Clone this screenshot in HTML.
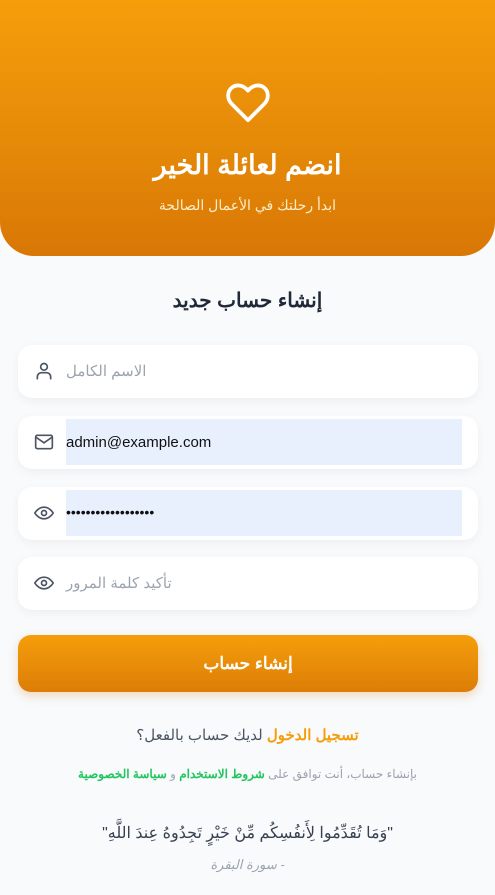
<!DOCTYPE html>
<html lang="ar" dir="rtl"><head><meta charset="utf-8"><style>
*{margin:0;padding:0;box-sizing:border-box}
body{width:495px;height:895px;background:#f8fafc;font-family:"Liberation Sans","Noto Sans CJK SC",sans-serif;position:relative;overflow:hidden}
.hdr{position:absolute;left:0;top:0;width:495px;height:256px;background:linear-gradient(180deg,#f59e0b 0%,#e58a08 55%,#d97706 100%);border-radius:0 0 34px 34px;text-align:center;color:#fff}
.hdr svg{position:absolute;left:225px;top:82px}
.t1{position:absolute;top:150px;width:100%;font-size:27px;font-weight:bold}
.t2{position:absolute;top:197px;width:100%;font-size:14px;color:#fdecc8}
.h2{position:absolute;top:288px;width:100%;text-align:center;font-size:20px;font-weight:bold;color:#1f2937}
.inp{position:absolute;left:18px;width:460px;height:53px;background:#fff;border-radius:14px;box-shadow:0 3px 10px rgba(0,0,0,.05)}
.inp svg{position:absolute;left:16px;top:16px}
.ph{position:absolute;top:17px;font-size:15px;color:#9ca3af;white-space:nowrap}
.fill{position:absolute;left:48px;top:3px;width:396px;height:46px;background:#e8f0fe;direction:ltr;font-size:15px;color:#111;padding:15px 0 0 0}
.btn{position:absolute;left:18px;top:635px;width:460px;height:57px;border-radius:13px;background:linear-gradient(180deg,#f59e0b,#dd7d07);color:#fff;font-weight:bold;font-size:17px;text-align:center;line-height:57px;box-shadow:0 4px 10px rgba(217,119,6,.25)}
.c{position:absolute;width:100%;text-align:center}
</style></head><body>
<div class="hdr">
<svg width="46" height="42" viewBox="0 0 24 22" fill="none" stroke="#fff" stroke-width="2" stroke-linejoin="round"><path d="M12 20 L3.5 11.5 C1 9 1 5 3.5 3 C6 1 9.5 1.5 12 4.5 C14.5 1.5 18 1 20.5 3 C23 5 23 9 20.5 11.5 Z"/></svg>
<div class="t1">انضم لعائلة الخير</div>
<div class="t2">ابدأ رحلتك في الأعمال الصالحة</div>
</div>
<div class="h2">إنشاء حساب جديد</div>
<div class="inp" style="top:345px"><svg width="20" height="20" viewBox="0 0 24 24" fill="none" stroke="#4b5563" stroke-width="2"><circle cx="12" cy="7" r="4"/><path d="M4 22v-3a5 5 0 0 1 5-5h6a5 5 0 0 1 5 5v3"/></svg><div class="ph" style="left:48px">الاسم الكامل</div></div>
<div class="inp" style="top:416px"><svg width="20" height="20" viewBox="0 0 24 24" fill="none" stroke="#4b5563" stroke-width="2"><rect x="2" y="4" width="20" height="16" rx="2"/><path d="M2 6l10 7 10-7"/></svg><div class="fill">admin@example.com</div></div>
<div class="inp" style="top:487px"><svg width="20" height="20" viewBox="0 0 24 24" fill="none" stroke="#4b5563" stroke-width="2"><path d="M1 12s4-7 11-7 11 7 11 7-4 7-11 7S1 12 1 12z"/><circle cx="12" cy="12" r="3"/></svg><div class="fill" style="font-size:14px;padding-top:14px">••••••••••••••••••</div></div>
<div class="inp" style="top:557px"><svg width="20" height="20" viewBox="0 0 24 24" fill="none" stroke="#4b5563" stroke-width="2"><path d="M1 12s4-7 11-7 11 7 11 7-4 7-11 7S1 12 1 12z"/><circle cx="12" cy="12" r="3"/></svg><div class="ph" style="left:48px">تأكيد كلمة المرور</div></div>
<div class="btn">إنشاء حساب</div>
<div class="c" style="top:726px;font-size:15px;color:#4b5563"><b style="color:#f59e0b">تسجيل الدخول</b> لديك حساب بالفعل؟</div>
<div class="c" style="top:767px;font-size:12px;color:#9ca3af">بإنشاء حساب، أنت توافق على <b style="color:#22c55e">شروط الاستخدام</b> و <b style="color:#22c55e">سياسة الخصوصية</b></div>
<div class="c" style="top:823px;font-size:16px;color:#374151">"وَمَا تُقَدِّمُوا لِأَنفُسِكُم مِّنْ خَيْرٍ تَجِدُوهُ عِندَ اللَّهِ"</div>
<div class="c" style="top:857px;font-size:13px;color:#9ca3af;font-style:italic">- سورة البقرة</div>
</body></html>
